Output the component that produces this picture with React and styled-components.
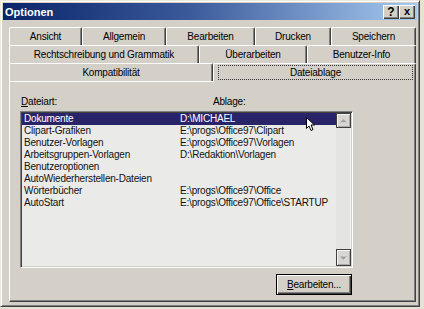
import React from "react";
import styled, { createGlobalStyle } from "styled-components";

const Global = createGlobalStyle`
  html, body { margin: 0; padding: 0; width: 424px; height: 309px; overflow: hidden; background: #e4e2d3; }
  body { font-family: "Liberation Sans", Arial, sans-serif; font-size: 10px; letter-spacing: -0.2px; color: #000; }
  #root { width: 424px; height: 309px; }
`;

const Window = styled.div`
  width: 420px;
  height: 307px;
  box-sizing: border-box;
  background: #d4d0c8;
  border: 1px solid;
  border-color: #eceadf #404040 #404040 #eceadf;
  box-shadow: inset 1px 1px #ffffff, inset -1px -1px #808080;
  padding: 2px;
  display: flex;
  flex-direction: column;
`;

const TitleBar = styled.div`
  height: 17px;
  flex: none;
  background: linear-gradient(to right, #0a246a 0%, #3a5a9a 45%, #a6caf0 100%);
  display: flex;
  align-items: center;
  justify-content: space-between;
  padding: 0 2px 0 2px;
`;

const Title = styled.span`
  color: #fff;
  font-weight: bold;
  font-size: 11px;
  letter-spacing: 0;
`;

const TitleButtons = styled.div`
  display: flex;
  gap: 0;
`;

const TitleButton = styled.div`
  width: 16px;
  height: 14px;
  box-sizing: border-box;
  background: #d4d0c8;
  box-shadow: inset 1px 1px #ffffff, inset -1px -1px #404040, inset -2px -2px #808080;
  display: flex;
  align-items: center;
  justify-content: center;
  font-weight: bold;
  font-size: ${(p) => p.$size || 11}px;
  letter-spacing: 0;
  line-height: 1;
`;

const Body = styled.div`
  flex: 1;
  display: flex;
  flex-direction: column;
  padding: 7px 1px 2px 6px;
  min-height: 0;
`;

const TabRow = styled.div`
  display: flex;
  height: 18px;
  flex: none;
`;

const Tab = styled.div`
  width: ${(p) => p.$w}px;
  flex: none;
  box-sizing: border-box;
  height: ${(p) => (p.$active ? 19 : 18)}px;
  margin-bottom: ${(p) => (p.$active ? -1 : 0)}px;
  position: ${(p) => (p.$active ? "relative" : "static")};
  z-index: ${(p) => (p.$active ? 1 : 0)};
  background: #d4d0c8;
  border-top: 1px solid #ffffff;
  border-left: 1px solid #ffffff;
  border-right: 1px solid #404040;
  box-shadow: inset -1px 0 #808080;
  border-top-left-radius: 2px;
  border-top-right-radius: 2px;
  display: flex;
  align-items: stretch;
  justify-content: stretch;
  padding: ${(p) => (p.$active ? "1px 2px 2px 4px" : "0")};
`;

const TabLabel = styled.span`
  flex: 1;
  display: flex;
  align-items: center;
  justify-content: center;
  border: 1px dotted ${(p) => (p.$focus ? "#333" : "transparent")};
`;

const Panel = styled.div`
  flex: 1;
  box-sizing: border-box;
  border-left: 1px solid #ffffff;
  border-top: 1px solid #ffffff;
  border-right: 1px solid #404040;
  border-bottom: 1px solid #404040;
  box-shadow: inset -1px -1px #808080;
  padding: 14px 0 0 10px;
  display: flex;
  flex-direction: column;
`;

const LabelRow = styled.div`
  display: flex;
  height: 12px;
  line-height: 12px;
  margin-bottom: 3px;
`;

const Label = styled.span`
  width: ${(p) => (p.$w ? `${p.$w}px` : "auto")};
  flex: none;
  padding-left: 1px;
  box-sizing: border-box;
  u { text-decoration: underline; }
`;

const ListBox = styled.div`
  width: 333px;
  height: 157px;
  box-sizing: border-box;
  border: 1px solid;
  border-color: #808080 #ffffff #ffffff #808080;
  box-shadow: inset 1px 1px #404040, inset -1px -1px #d4d0c8;
  padding: 1px;
  flex: none;
`;

const ListInner = styled.div`
  position: relative;
  display: flex;
  height: 100%;
`;

const Items = styled.div`
  flex: 1;
  background: #eaeae8;
`;

const Row = styled.div`
  display: flex;
  height: 12px;
  line-height: 12px;
  background: ${(p) => (p.$sel ? "#29246a" : "transparent")};
  color: ${(p) => (p.$sel ? "#ffffff" : "#111")};
  white-space: nowrap;
`;

const Cell = styled.span`
  width: ${(p) => (p.$w ? `${p.$w}px` : "auto")};
  flex: none;
  padding-left: ${(p) => p.$pl || 0}px;
`;

const ScrollBar = styled.div`
  width: 15px;
  flex: none;
  display: flex;
  flex-direction: column;
  background: #e4e4e2;
  box-shadow: inset -1px 0 #f2f2f0;
`;

const ScrollBtn = styled.div`
  height: ${(p) => p.$h}px;
  flex: none;
  box-sizing: border-box;
  background: #d8d6d2;
  border: 1px solid #404040;
  box-shadow: inset 1px 1px #f4f4f2, inset -1px -1px #a8a8a8;
  display: flex;
  align-items: center;
  justify-content: center;
`;

const Track = styled.div`
  flex: 1;
`;

const ButtonRow = styled.div`
  width: 333px;
  display: flex;
  justify-content: flex-end;
  margin-top: 6px;
`;

const PushButton = styled.div`
  width: 76px;
  height: 21px;
  box-sizing: border-box;
  border: 1px solid #000;
  background: #d4d0c8;
  box-shadow: inset 1px 1px #ffffff, inset -1px -1px #404040, inset -2px -2px #808080;
  display: flex;
  align-items: center;
  justify-content: center;
  margin-right: 1px;
  u { text-decoration: underline; }
`;

const Cursor = styled.svg`
  position: absolute;
  left: 284px;
  top: 4px;
  width: 10px;
  height: 15px;
`;

const Arrow = ({ up }) => (
  <svg width="7" height="4" viewBox="0 0 7 4">
    {up ? (
      <>
        <path d="M1 4 L4 1 L7 4 Z" fill="#ffffff" />
        <path d="M0 3.5 L3.5 0 L7 3.5 Z" fill="#a0a0a0" />
      </>
    ) : (
      <>
        <path d="M1 1 L4 4 L7 1 Z" fill="#ffffff" />
        <path d="M0 0.5 L3.5 4 L7 0.5 Z" fill="#a0a0a0" />
      </>
    )}
  </svg>
);

const rows = [
  ["Dokumente", "D:\\MICHAEL"],
  ["Clipart-Grafiken", "E:\\progs\\Office97\\Clipart"],
  ["Benutzer-Vorlagen", "E:\\progs\\Office97\\Vorlagen"],
  ["Arbeitsgruppen-Vorlagen", "D:\\Redaktion\\Vorlagen"],
  ["Benutzeroptionen", ""],
  ["AutoWiederherstellen-Dateien", ""],
  ["Wörterbücher", "E:\\progs\\Office97\\Office"],
  ["AutoStart", "E:\\progs\\Office97\\Office\\STARTUP"],
];

const tabRows = [
  [["Ansicht", 73], ["Allgemein", 84], ["Bearbeiten", 89], ["Drucken", 76], ["Speichern", 85]],
  [["Rechtschreibung und Grammatik", 190], ["Überarbeiten", 108], ["Benutzer-Info", 109]],
  [["Kompatibilität", 204], ["Dateiablage", 203, true]],
];

export default function App() {
  return (
    <>
      <Global />
      <Window>
        <TitleBar>
          <Title>Optionen</Title>
          <TitleButtons>
            <TitleButton $size={12}>?</TitleButton>
            <TitleButton $size={11}>x</TitleButton>
          </TitleButtons>
        </TitleBar>
        <Body>
          {tabRows.map((r, i) => (
            <TabRow key={i}>
              {r.map(([label, w, active]) => (
                <Tab key={label} $w={w} $active={active}>
                  <TabLabel $focus={active}>{label}</TabLabel>
                </Tab>
              ))}
            </TabRow>
          ))}
          <Panel>
            <LabelRow>
              <Label $w={192}>
                <u>D</u>ateiart:
              </Label>
              <Label>Ablage:</Label>
            </LabelRow>
            <ListBox>
              <ListInner>
                <Items>
                  {rows.map(([a, b], i) => (
                    <Row key={a} $sel={i === 0}>
                      <Cell $w={156} $pl={2}>{a}</Cell>
                      <Cell>{b}</Cell>
                    </Row>
                  ))}
                </Items>
                <ScrollBar>
                  <ScrollBtn $h={15}>
                    <Arrow up />
                  </ScrollBtn>
                  <Track />
                  <ScrollBtn $h={17}>
                    <Arrow />
                  </ScrollBtn>
                </ScrollBar>
                <Cursor viewBox="0 0 10 15">
                  <path
                    d="M0.5 0.5 L0.5 11.5 L3 9 L5 13.5 L7 12.5 L5 8 L8.5 8 Z"
                    fill="#ffffff"
                    stroke="#000"
                    strokeWidth="1"
                    strokeLinejoin="miter"
                  />
                </Cursor>
              </ListInner>
            </ListBox>
            <ButtonRow>
              <PushButton>
                <span>
                  <u>B</u>earbeiten...
                </span>
              </PushButton>
            </ButtonRow>
          </Panel>
        </Body>
      </Window>
    </>
  );
}
